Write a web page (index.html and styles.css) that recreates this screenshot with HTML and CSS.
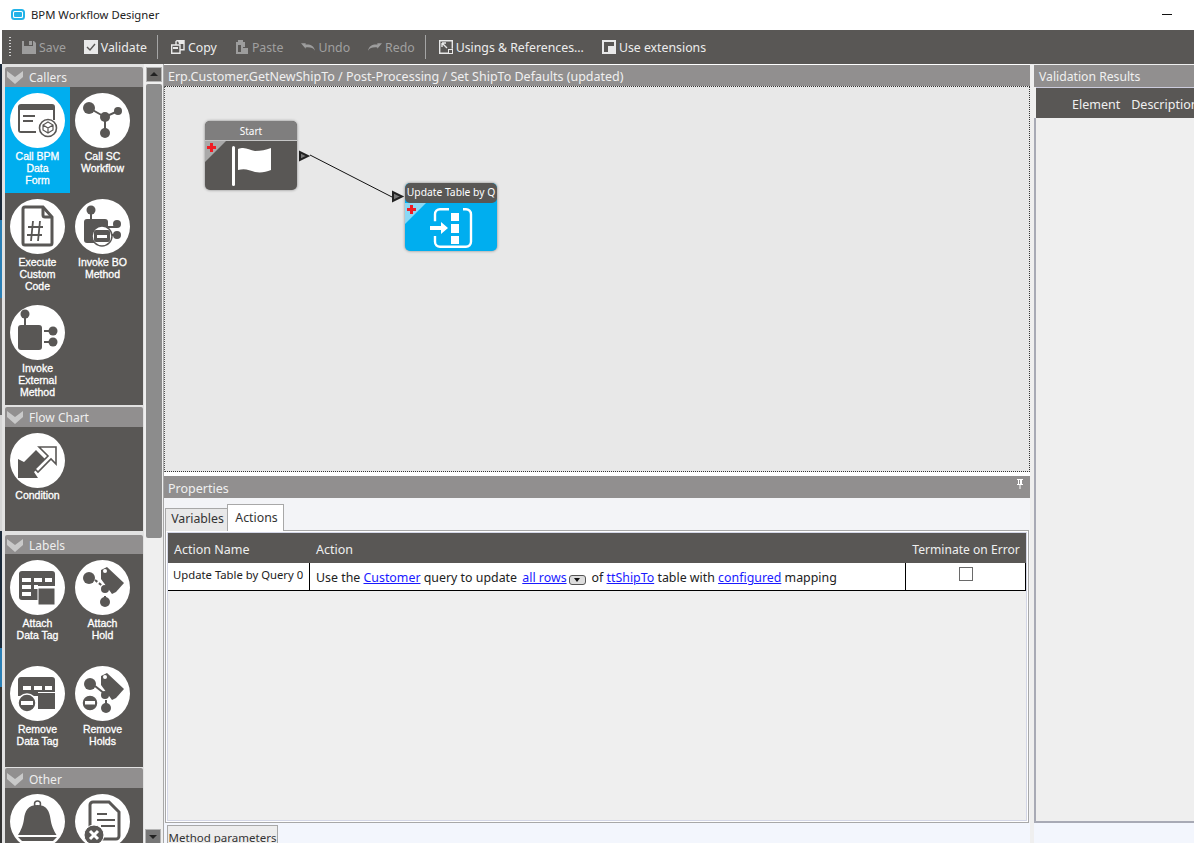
FILE: index.html
```html
<!DOCTYPE html>
<html lang="en">
<head>
<meta charset="utf-8">
<title>BPM Workflow Designer</title>
<link rel="stylesheet" href="styles.css">
</head>
<body>
<div class="app">
  <header class="titlebar">
    <svg class="app-logo" viewBox="0 0 14 12"><rect x="1" y="1" width="12" height="9" rx="2.5" fill="#fff" stroke="#22b3e8" stroke-width="2"/><rect x="3" y="3" width="8" height="5" rx="1" fill="#22b3e8"/></svg>
    <span class="app-title">BPM Workflow Designer</span>
    <span class="minimize"></span>
  </header>

  <nav class="toolbar">
    <span class="grip"></span>
    <button class="tool off"><svg viewBox="0 0 14 14"><path d="M0 1h2v5h9V1h1l2 2v11H0z M7 1h3v4H7z" fill="#9d9d9d"/></svg>Save</button>
    <button class="tool"><svg viewBox="0 0 14 14"><rect width="14" height="14" fill="#e9e9e9"/><path d="M3 7l3 3 5-6" fill="none" stroke="#595755" stroke-width="1.4"/></svg>Validate</button>
    <span class="sep"></span>
    <button class="tool"><svg viewBox="0 0 14 14"><path d="M5 5V1.500l1-.8h7v9H9M.7 5h8.300v8.300H.7z" fill="none" stroke="#e9e9e9" stroke-width="1.400"/><path d="M7 1h6v3H8zM2 7h5v2H2z" fill="#e9e9e9"/></svg>Copy</button>
    <button class="tool off"><svg viewBox="0 0 14 14"><path d="M1 2h2V0h5v2h2v5H8v7H1z" fill="#9d9d9d"/><path d="M3 5h3v7H3z" fill="#595755"/><path d="M8 8h5v6H8z" fill="#9d9d9d"/></svg>Paste</button>
    <button class="tool off"><svg viewBox="0 0 15 14"><path d="M0 3h5v1.500C10 4 14 6 15 11 13 8 10 7 5 7.500V9z" fill="#9d9d9d"/></svg>Undo</button>
    <button class="tool off"><svg viewBox="0 0 15 14"><path d="M15 3h-5v1.500C5 4 1 6 0 11 2 8 5 7 10 7.500V9z" fill="#9d9d9d"/></svg>Redo</button>
    <span class="sep"></span>
    <button class="tool"><svg viewBox="0 0 14 14"><path d="M.7 9.500V.7h12.600v8M9 13.300H.7V9" fill="none" stroke="#e9e9e9" stroke-width="1.400"/><path d="M3 3l5 5M3 3h4M3 3v4" stroke="#e9e9e9" fill="none" stroke-width="1.400"/><rect x="9.500" y="9.500" width="4" height="4" fill="none" stroke="#e9e9e9"/></svg>Usings &amp; References...</button>
    <button class="tool"><svg viewBox="0 0 14 14"><path d="M0 0h14v14H0z" fill="#e9e9e9"/><path d="M2 2h10v4H6v6H2z" fill="#595755"/></svg>Use extensions</button>
  </nav>

  <main class="workspace">
    <div class="desktop-edge"></div>

    <aside class="palette">
      <section class="group callers">
        <h2 class="group-head"><svg viewBox="0 0 16 13"><path d="M0 0l8 6 8-6v6l-8 7-8-7z" fill="#c9c9c9"/></svg>Callers</h2>
        <div class="group-items">
          <div class="item selected">
            <svg class="ico" viewBox="0 0 55 55"><circle cx="27.500" cy="27.500" r="27.500" fill="#fff"/><path d="M8 14a3 3 0 0 1 3-3h31a3 3 0 0 1 3 3v13h-2V17H10v21h16v2H11a3 3 0 0 1-3-3z" fill="#595755"/><path d="M13 22h12v2H13zM13 27h10v2H13z" fill="#595755"/><circle cx="38" cy="35" r="8.500" fill="#fff" stroke="#595755" stroke-width="1.600"/><path d="M38 29l5 3v5l-5 3-5-3v-5zM33 32l5 3 5-3M38 35v5" fill="none" stroke="#595755" stroke-width="1.200"/></svg>
            <span>Call BPM<br>Data<br>Form</span>
          </div>
          <div class="item">
            <svg class="ico" viewBox="0 0 55 55"><circle cx="27.500" cy="27.500" r="27.500" fill="#fff"/><path d="M14 15l16 9 13-6M30 24v16" stroke="#595755" stroke-width="2" fill="none"/><circle cx="14" cy="15" r="6" fill="#595755"/><circle cx="30" cy="24" r="5" fill="#595755"/><circle cx="43" cy="18" r="4" fill="#595755"/><circle cx="30" cy="40" r="5" fill="#595755"/></svg>
            <span>Call SC<br>Workflow</span>
          </div>
          <div class="item">
            <svg class="ico" viewBox="0 0 55 55"><circle cx="27.500" cy="27.500" r="27.500" fill="#fff"/><path d="M15 8h18l9 10v26a2 2 0 0 1-2 2H15a2 2 0 0 1-2-2V10a2 2 0 0 1 2-2z" fill="none" stroke="#595755" stroke-width="3"/><path d="M33 8v8a2 2 0 0 0 2 2h7" fill="none" stroke="#595755" stroke-width="3"/><path d="M23 22l-2 20M30 22l-2 20M18 28h15M17 36h15" stroke="#595755" stroke-width="1.800"/></svg>
            <span>Execute<br>Custom<br>Code</span>
          </div>
          <div class="item">
            <svg class="ico" viewBox="0 0 55 55"><circle cx="27.500" cy="27.500" r="27.500" fill="#fff"/><circle cx="16" cy="11" r="4.500" fill="#595755"/><path d="M16 14v8" stroke="#595755" stroke-width="2"/><rect x="9" y="20" width="24" height="24" rx="3" fill="#595755"/><path d="M33 28h9M33 36h9" stroke="#595755" stroke-width="2"/><circle cx="42" cy="25" r="4" fill="#595755"/><circle cx="42" cy="36" r="4" fill="#595755"/><circle cx="27" cy="37" r="10" fill="#fff" stroke="#595755" stroke-width="1.500"/><rect x="19" y="31" width="16" height="12" rx="2" fill="#595755"/><rect x="22" y="36" width="10" height="3" fill="#fff"/></svg>
            <span>Invoke BO<br>Method</span>
          </div>
          <div class="item">
            <svg class="ico" viewBox="0 0 55 55"><circle cx="27.500" cy="27.500" r="27.500" fill="#fff"/><circle cx="15" cy="9" r="4.500" fill="#595755"/><path d="M15 12v10" stroke="#595755" stroke-width="2"/><rect x="8" y="20" width="24" height="25" rx="3" fill="#595755"/><path d="M34 26h8M34 37h8" stroke="#595755" stroke-width="2"/><circle cx="43" cy="26" r="4.500" fill="#595755"/><circle cx="43" cy="37" r="4.500" fill="#595755"/></svg>
            <span>Invoke<br>External<br>Method</span>
          </div>
        </div>
      </section>

      <section class="group flow">
        <h2 class="group-head"><svg viewBox="0 0 16 13"><path d="M0 0l8 6 8-6v6l-8 7-8-7z" fill="#c9c9c9"/></svg>Flow Chart</h2>
        <div class="group-items">
          <div class="item">
            <svg class="ico" viewBox="0 0 55 55"><circle cx="27.500" cy="27.500" r="27.500" fill="#fff"/><path d="M8 26l6 3 12-12 10 10-12 12 4 6H8z" fill="#595755"/><path d="M29 14h17v17l-5-5-13 13-3-3 13-13z" fill="#fff" stroke="#595755" stroke-width="1.600"/></svg>
            <span>Condition</span>
          </div>
        </div>
      </section>

      <section class="group labels">
        <h2 class="group-head"><svg viewBox="0 0 16 13"><path d="M0 0l8 6 8-6v6l-8 7-8-7z" fill="#c9c9c9"/></svg>Labels</h2>
        <div class="group-items">
          <div class="item">
            <svg class="ico" viewBox="0 0 55 55"><circle cx="27.500" cy="27.500" r="27.500" fill="#fff"/><path d="M9 14a3 3 0 0 1 3-3h30a3 3 0 0 1 3 3v12H28v14H12a3 3 0 0 1-3-3z" fill="#595755"/><path d="M12 18h9v4h-9zM24 18h8v4h-8zM35 18h7v4h-7zM12 25h9v4h-9zM24 25h4v4h-4zM12 32h9v4h-9z" fill="#fff"/><path d="M28 28h17v17H28z" fill="#595755" stroke="#fff"/></svg>
            <span>Attach<br>Data Tag</span>
          </div>
          <div class="item">
            <svg class="ico" viewBox="0 0 55 55"><circle cx="27.500" cy="27.500" r="27.500" fill="#fff"/><circle cx="14" cy="18" r="6" fill="#595755"/><path d="M20 20l10 8M30 36v6" stroke="#595755" stroke-width="2" stroke-dasharray="3 2"/><circle cx="30" cy="42" r="5" fill="#595755"/><circle cx="30" cy="29" r="4" fill="#595755"/><path d="M26 10l6-3 17 16-8 9-4 2-11-15z" fill="#595755"/><circle cx="30" cy="11" r="2" fill="#fff"/></svg>
            <span>Attach<br>Hold</span>
          </div>
          <div class="item">
            <svg class="ico" viewBox="0 0 55 55"><circle cx="27.500" cy="27.500" r="27.500" fill="#fff"/><path d="M8 14a3 3 0 0 1 3-3h31a3 3 0 0 1 3 3v12H28v4H8z" fill="#595755"/><path d="M13 20h8v4h-8zM24 20h8v4h-8zM35 20h7v4h-7z" fill="#fff"/><path d="M28 27h17v16H28z" fill="#595755"/><circle cx="17" cy="37" r="9" fill="#595755" stroke="#fff" stroke-width="1.500"/><rect x="11" y="35" width="12" height="4" fill="#fff"/></svg>
            <span>Remove<br>Data Tag</span>
          </div>
          <div class="item">
            <svg class="ico" viewBox="0 0 55 55"><circle cx="27.500" cy="27.500" r="27.500" fill="#fff"/><circle cx="15" cy="18" r="6" fill="#595755"/><circle cx="31" cy="42" r="5" fill="#595755"/><path d="M20 20l10 8M31 34v4" stroke="#595755" stroke-width="2"/><circle cx="30" cy="29" r="4" fill="#595755"/><path d="M26 10l6-3 17 16-8 9-4 2-11-15z" fill="#595755"/><circle cx="30" cy="11" r="2" fill="#fff"/><circle cx="15" cy="37" r="8" fill="#595755" stroke="#fff" stroke-width="1.500"/><rect x="10" y="35" width="10" height="3.500" fill="#fff"/></svg>
            <span>Remove<br>Holds</span>
          </div>
        </div>
      </section>

      <section class="group other">
        <h2 class="group-head"><svg viewBox="0 0 16 13"><path d="M0 0l8 6 8-6v6l-8 7-8-7z" fill="#c9c9c9"/></svg>Other</h2>
        <div class="group-items">
          <div class="item">
            <svg class="ico" viewBox="0 0 55 55"><circle cx="27.500" cy="27.500" r="27.500" fill="#fff"/><circle cx="27.500" cy="10" r="3" fill="none" stroke="#595755" stroke-width="1.500"/><path d="M27.500 11c9 0 12 6 13 14 1 7 3 11 6 16H8c3-5 5-9 6-16 1-8 4-14 13.500-14z" fill="#595755"/><path d="M8 43h39l-4 4H12z" fill="#595755"/></svg>
          </div>
          <div class="item">
            <svg class="ico" viewBox="0 0 55 55"><circle cx="27.500" cy="27.500" r="27.500" fill="#fff"/><path d="M18 8h16l10 10v24a3 3 0 0 1-3 3H18a3 3 0 0 1-3-3V11a3 3 0 0 1 3-3z" fill="none" stroke="#595755" stroke-width="3"/><path d="M22 20h10M22 26h18M26 32h14" stroke="#595755" stroke-width="2"/><circle cx="19" cy="41" r="10" fill="#595755" stroke="#fff"/><path d="M15 37l8 8M23 37l-8 8" stroke="#fff" stroke-width="3"/></svg>
          </div>
        </div>
      </section>
    </aside>

    <div class="palette-scroll">
      <span class="scroll-btn up"></span>
      <span class="scroll-thumb"></span>
      <span class="scroll-btn down"></span>
    </div>

    <div class="center">
      <div class="pane-head path">Erp.Customer.GetNewShipTo / Post-Processing / Set ShipTo Defaults (updated)</div>
      <div class="canvas">
        <svg class="wires" viewBox="0 0 866 386"><path d="M146 69l82 42" stroke="#111" stroke-width="1" fill="none"/><path d="M136 66v8l8-4z" fill="#777" stroke="#222" stroke-width="2"/><path d="M229 106v9l9-4.500z" fill="#777" stroke="#222" stroke-width="2"/></svg>
        <div class="node node-start">
          <div class="node-head">Start</div>
          <div class="node-body">
            <span class="corner"></span><span class="plus"></span>
            <svg viewBox="0 0 40 40"><rect x="0" y="0" width="3" height="40" rx="1.500" fill="#fff"/><path d="M6 3c7-3 11 1 17 2 6 0 11-1 16-3v22c-5 2-10 3-16 2-6-2-10-4-17-2z" fill="#fff"/></svg>
          </div>
        </div>
        <div class="node node-update">
          <div class="node-head">Update Table by Q</div>
          <div class="node-body">
            <span class="corner"></span><span class="plus"></span>
            <svg viewBox="0 0 44 44"><path d="M20 3.200h-9a5 5 0 0 0-5 5v7M6 30v5.800a5 5 0 0 0 5 5h26a5 5 0 0 0 5-5V8.200a5 5 0 0 0-5-5h-3" fill="none" stroke="#fff" stroke-width="2.400"/><path d="M22 7h8v8h-8zM22 18h8v9h-8zM22 30h8v8h-8z" fill="#fff"/><path d="M1 20h11v-4l7 6-7 6v-4H1z" fill="#fff"/></svg>
          </div>
        </div>
      </div>

      <div class="pane-head props">Properties<svg class="pin" viewBox="0 0 8 10"><path d="M1 0h6v1H6v4h1v1H4.500v4h-1V6H1V5h1V1H1zM3 1v4h1V1z" fill="#fff"/></svg></div>
      <div class="props-body">
        <div class="tabs">
          <span class="tab">Variables</span>
          <span class="tab active">Actions</span>
        </div>
        <div class="tab-panel">
          <div class="tab-inner">
            <div class="grid-row grid-head">
              <div class="c-name">Action Name</div>
              <div class="c-action">Action</div>
              <div class="c-term">Terminate on Error</div>
            </div>
            <div class="grid-row grid-data">
              <div class="c-name">Update Table by Query 0</div>
              <div class="c-action">Use the <a href="#">Customer</a> query to update <a class="rows" href="#">all rows</a><span class="drop"></span>of <a href="#">ttShipTo</a> table with <a href="#">configured</a> mapping</div>
              <div class="c-term"><span class="check"></span></div>
            </div>
          </div>
        </div>
      </div>
      <div class="bottom-tabs"><span class="bottom-tab">Method parameters</span></div>
    </div>

    <aside class="results">
      <div class="pane-head">Validation Results</div>
      <div class="results-head"><span>Element</span><span>Description</span></div>
      <div class="results-body"></div>
      <div class="results-foot"></div>
    </aside>
  </main>
</div>
</body>
</html>
```
FILE: styles.css
```css
* { box-sizing: border-box; }
html, body { margin: 0; height: 100%; overflow: hidden; }
body { font-family: "Noto Sans", "Open Sans", sans-serif; font-size: 13px; color: #222; background: #fff; }
.app { width: 1194px; height: 843px; display: flex; flex-direction: column; overflow: hidden; }

.titlebar { height: 30px; flex: none; display: flex; align-items: center; background: #fff; padding: 0 0 0 11px; }
.app-logo { width: 14px; height: 12px; margin-right: 6px; margin-top: -1px; }
.app-title { font-size: 11.300px; color: #222; margin-top: -1px; }
.minimize { width: 10px; height: 1px; background: #111; margin-left: auto; margin-right: 22px; margin-top: -2px; }

.toolbar { height: 34px; flex: none; margin-left: 2px; background: #595755; display: flex; align-items: center; gap: 18px; padding-left: 7px; }
.grip { width: 2px; height: 20px; margin-right: -7px; background: repeating-linear-gradient(#d0d0d0 0 1px, transparent 1px 3px); }
.tool { display: flex; align-items: center; gap: 3px; background: none; border: 0; padding: 1px 0 0; font: inherit; font-size: 12.300px; color: #ededed; line-height: 18px; }
.tool svg { width: 14px; height: 14px; flex: none; margin-top: -2px; }
.tool.off { color: #a0a0a0; }
.sep { width: 1px; height: 24px; background: #a5a5a5; margin: 0 -5px 0 -8px; }

.workspace { flex: 1; min-height: 0; display: flex; background: #efefef; }
.desktop-edge { width: 2px; flex: none; background: linear-gradient(#1b2a3a 0 20%, #2a7fb5 20% 30%, #6a6a6a 30% 45%, #d5d5d5 45% 60%, #1b2a3a 60% 75%, #2a7fb5 75% 80%, #333 80%); }

.palette { width: 142px; flex: none; height: 779px; overflow: hidden; background: #e2e2e2; padding: 3px 0 0 3px; }
.group { width: 138px; }
.group-head { height: 20px; margin: 0; display: flex; align-items: center; gap: 6px; padding-left: 2px; background: #918f8f; color: #eee; font-size: 12px; font-weight: 400; border-radius: 2px 2px 0 0; }
.group-head svg { width: 16px; height: 13px; }
.group-items { background: #595755; display: flex; flex-wrap: wrap; align-content: flex-start; padding-right: 8px; }
.callers { margin-bottom: 2px; }
.callers .group-items { height: 318px; }
.flow { margin-bottom: 4px; }
.flow .group-items { height: 104px; }
.flow .item span { margin-top: 1px; }
.labels { margin-bottom: 1px; }
.labels .group-head { height: 19px; padding-top: 1px; }
.labels .group-items { height: 213px; }
.other .group-head { padding-top: 2px; }
.other .group-items { height: 60px; }
.item { width: 65px; height: 106px; padding-top: 6px; display: flex; flex-direction: column; align-items: center; }
.item.selected { background: #00aeef; }
.ico { width: 55px; height: 55px; flex: none; }
.item span { margin-top: 2px; width: 60px; text-align: center; font-family: "Liberation Sans", Arial, sans-serif; font-size: 10.500px; line-height: 12px; color: #fff; -webkit-text-stroke: .3px #fff; }

.palette-scroll { width: 20px; flex: none; height: 779px; position: relative; display: flex; flex-direction: column; align-items: center; padding-top: 3px; background: #efefef; border-right: 1px solid #a8a8a8; }
.scroll-btn { width: 16px; height: 15px; background: #6b6967; border: 1px solid #b5b5b5; position: relative; }
.scroll-btn::after { content: ""; position: absolute; left: 3px; border: 4px solid transparent; }
.up::after { top: 0; border-bottom: 4px solid #222; }
.down::after { top: 5px; border-top: 4px solid #222; }
.down { position: absolute; top: 765px; left: 1px; background: #777; }
.scroll-thumb { width: 16px; height: 454px; margin-top: 2px; background: #8c8c8c; border-radius: 2px; }

.center { width: 866px; flex: none; display: flex; flex-direction: column; height: 779px; background: #fff; }
.pane-head { height: 22px; flex: none; background: #918f8f; color: #f0f0f0; font-size: 12.500px; line-height: 24px; padding-left: 4px; }
.path { margin-top: 1px; height: 21px; }
.canvas { height: 386px; flex: none; position: relative; background: #e8e8e8; border: 1px dotted #333; border-left: 1px dotted #555; overflow: hidden; }
.wires { position: absolute; left: -1px; top: -1px; width: 866px; height: 386px; }
.node { position: absolute; width: 92px; height: 69px; border-radius: 5px; box-shadow: 0 0 3px rgba(0,0,0,.45); overflow: hidden; }
.node-head { height: 20px; font-size: 10.300px; line-height: 18px; text-align: center; color: #fff; white-space: nowrap; }
.node-body { position: relative; height: 49px; display: flex; justify-content: center; align-items: center; }
.node-body svg { position: relative; }
.corner { position: absolute; left: 0; top: 0; border-top: 21px solid #a9a9a9; border-right: 21px solid transparent; }
.plus { position: absolute; left: 2px; top: 2px; width: 9px; height: 9px; background: linear-gradient(#f01c24, #f01c24) center / 9px 3px no-repeat, linear-gradient(#f01c24, #f01c24) center / 3px 9px no-repeat; }
.node-start { left: 40px; top: 34px; background: #595755; }
.node-start .node-head { background: #7f7e7e; border-bottom: 1px solid #c5c5c5; font-size: 10px; line-height: 21px; }
.node-start svg { width: 40px; height: 40px; margin-left: 2px; }
.node-update { left: 240px; top: 96px; height: 68px; background: #00aeef; }
.node-update .node-head { background: #595755; border-radius: 5px; }
.node-update .corner { border-top-color: #8ad8f5; }
.node-update svg { width: 44px; height: 44px; }

.props { margin-top: 4px; position: relative; line-height: 26px; }
.pin { position: absolute; right: 6px; top: 3px; width: 8px; height: 10px; }
.props-body { height: 325px; flex: none; background: #f3f4f7; padding: 0 1px; display: flex; flex-direction: column; }
.tabs { height: 33px; flex: none; display: flex; align-items: flex-end; margin-bottom: -1px; position: relative; z-index: 1; }
.tab { height: 23px; width: 63px; background: #e8e8e8; border: 1px solid #a8a8a8; border-bottom: 0; padding-left: 2px; text-align: center; font-size: 12.300px; line-height: 19px; color: #333; }
.tab.active { width: 57px; height: 27px; background: #fff; line-height: 25px; margin-left: -1px; }
.tab-panel { flex: 1; min-height: 0; background: #fff; border: 1px solid #a8a8a8; padding: 1px; }
.tab-inner { height: 100%; background: #efefef; border: 1px solid #d3d6e6; }
.grid-row { display: flex; width: 858px; }
.grid-head { height: 30px; background: #595755; color: #efefef; font-size: 12.500px; line-height: 34px; }
.grid-data { height: 28px; background: #fff; border-bottom: 1px solid #000; border-right: 1px solid #000; color: #222; line-height: 28px; }
.c-name { width: 142px; flex: none; padding-left: 6px; white-space: nowrap; }
.c-action { width: 596px; flex: none; padding-left: 6px; white-space: nowrap; }
.c-term { width: 120px; flex: none; text-align: center; }
.grid-head .c-term { white-space: nowrap; font-size: 12.100px; }
.grid-data .c-name { font-size: 11.300px; padding-left: 5px; line-height: 24px; border-right: 1px solid #000; }
.grid-data .c-action { font-size: 12.380px; border-right: 1px solid #000; line-height: 30px; }
a { color: #1a1aff; }
.rows { margin-left: 2px; }
.drop { display: inline-block; width: 17px; height: 10px; margin: 0 6px 0 2px; vertical-align: -3px; border: 1px solid #555; border-radius: 3px; background: #ddd; position: relative; }
.drop::after { content: ""; position: absolute; left: 4px; top: 2px; border: 3.500px solid transparent; border-top: 4px solid #111; }
.check { display: inline-block; width: 14px; height: 14px; border: 1px solid #6a6a6a; background: #fff; vertical-align: top; margin-top: 4px; }

.bottom-tabs { height: 20px; flex: none; background: #f3f6fd; padding: 2px 0 0 3px; overflow: hidden; }
.bottom-tab { display: block; width: 111px; height: 20px; background: #ededed; border: 1px solid #a8a8a8; font-size: 11.500px; line-height: 23px; text-align: center; color: #333; }

.results { flex: 1; min-width: 0; height: 779px; display: flex; flex-direction: column; margin-left: 4px; overflow: hidden; background: #efefef; }
.results .pane-head { margin-top: 1px; height: 22px; white-space: nowrap; padding-left: 5px; font-size: 12.200px; }
.results-head { height: 31px; flex: none; background: #595755; color: #f0f0f0; font-size: 12.500px; line-height: 34px; padding-left: 36px; border-top: 1px solid #ccd; margin-left: 2px; display: flex; gap: 11px; white-space: nowrap; }
.results-body { flex: 1; min-height: 0; background: #efefef; border-left: 2px solid #a8aab5; border-bottom: 2px solid #a8aab5; }
.results-foot { height: 20px; flex: none; background: #f3f6fd; }
```
